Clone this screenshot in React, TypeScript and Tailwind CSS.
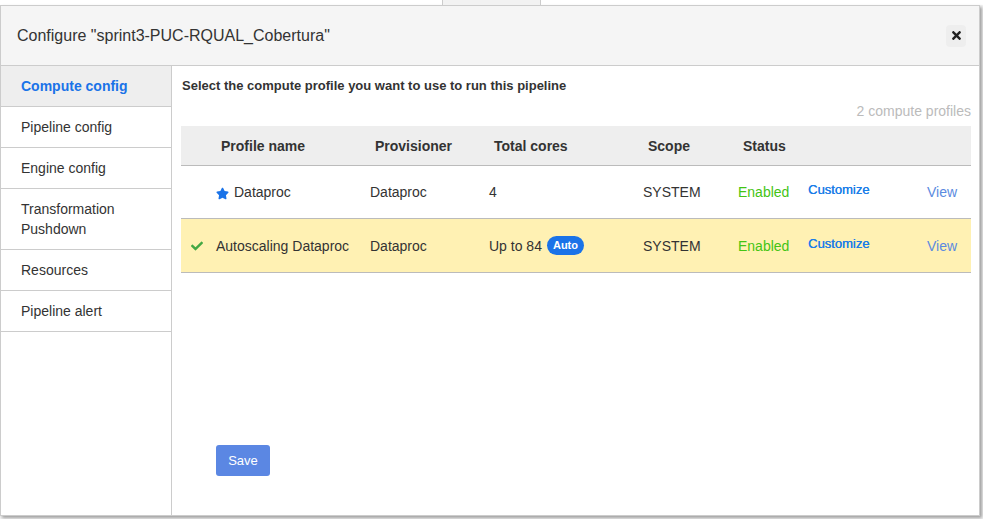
import { FaCheck, FaStar, FaTimes } from "react-icons/fa"

const sidebarItems = [
  { label: "Compute config", active: true },
  { label: "Pipeline config" },
  { label: "Engine config" },
  { label: "Transformation Pushdown", tall: true },
  { label: "Resources" },
  { label: "Pipeline alert" },
]

const profiles = [
  { name: "Dataproc", starred: true, cores: "4", selected: false },
  { name: "Autoscaling Dataproc", starred: false, cores: "Up to 84", auto: true, selected: true },
]

const cols = "grid grid-cols-[30px_154px_119px_154px_95px_70px_119px_1fr]"

export default function App() {
  return (
    <div className="h-[519px] w-[983px] overflow-hidden bg-[#f4f4f4] font-['Liberation_Sans',Arial,sans-serif] text-[#333]">
      {/* page behind the modal */}
      <div className="flex h-[5px] bg-white">
        <div className="ml-[442px] w-[99px] border-x border-[#ccc] bg-[#f2f2f2]" />
      </div>

      <div className="flex h-[511px] w-[980px] flex-col border border-[#ccc] bg-white shadow-[2px_2px_3px_rgba(0,0,0,0.35)]">
        {/* header */}
        <div className="flex h-[60px] shrink-0 items-center justify-between border-b border-[#ccc] bg-[#f5f5f5] pl-4 pr-[13px]">
          <h1 className="text-base">Configure "sprint3-PUC-RQUAL_Cobertura"</h1>
          <button className="flex h-[22px] w-[20px] items-center justify-center rounded bg-[#eeeeee] text-[#222]">
            <FaTimes size={13} />
          </button>
        </div>

        <div className="flex flex-1">
          {/* sidebar */}
          <div className="w-[171px] shrink-0 border-r border-[#ccc]">
            {sidebarItems.map((item) => (
              <div
                key={item.label}
                className={
                  "border-b border-[#ccc] py-[10px] pl-[20px] text-sm leading-5" +
                  (item.active ? " bg-[#eeeeee] font-bold text-[#1a73e8]" : "")
                }
              >
                <span className={item.tall ? "block w-[110px]" : ""}>{item.label}</span>
              </div>
            ))}
          </div>

          {/* content */}
          <div className="flex flex-1 flex-col pl-[9px] pr-[8px] pt-[12px]">
            <p className="pl-px text-[13px] font-bold leading-4">Select the compute profile you want to use to run this pipeline</p>
            <p className="mt-[7px] text-right text-sm leading-5 text-[#bbbbbb]">2 compute profiles</p>

            <div className="mt-[5px]">
              <div className={cols + " h-[40px] items-center border-b border-[#bbb] bg-[#eeeeee] text-sm font-bold"}>
                <div />
                <div className="pl-[10px]">Profile name</div>
                <div className="pl-[10px]">Provisioner</div>
                <div className="pl-[10px]">Total cores</div>
                <div className="pl-[10px]">Scope</div>
                <div className="pl-[10px]">Status</div>
                <div />
                <div />
              </div>

              {profiles.map((p) => (
                <div
                  key={p.name}
                  className={
                    cols +
                    " items-center border-b border-[#bbb] text-sm " +
                    (p.selected ? "h-[54px] bg-[#fff1b3]" : "h-[53px] bg-white")
                  }
                >
                  <div className="flex justify-center pl-[2px] text-[#43a843]">{p.selected && <FaCheck size={12} />}</div>
                  <div className="flex items-center gap-[5px] pl-[5px]">
                    {p.starred && <FaStar size={13} className="mt-[2px] text-[#1a73e8]" />}
                    <span>{p.name}</span>
                  </div>
                  <div className="pl-[5px]">Dataproc</div>
                  <div className="flex items-center gap-[5px] pl-[5px]">
                    <span>{p.cores}</span>
                    {p.auto && (
                      <span className="rounded-full bg-[#1a73e8] px-[6px] py-[2px] text-[11px] font-bold leading-[15px] text-white">Auto</span>
                    )}
                  </div>
                  <div className="pl-[5px]">SYSTEM</div>
                  <div className="pl-[5px] text-[#44c414]">Enabled</div>
                  <div className="mb-[3px] pl-[5px] text-[13px] text-[#1a7de8] [text-shadow:0.3px_0_0_#1a7de8]">Customize</div>
                  <div className="pl-[5px] text-[#5b8be0]">View</div>
                </div>
              ))}
            </div>

            <div className="mt-[172px] pl-[35px]">
              <button className="h-[31px] w-[54px] rounded-[3px] bg-[#5b87e3] text-[13px] text-white">Save</button>
            </div>
          </div>
        </div>
      </div>
    </div>
  )
}
